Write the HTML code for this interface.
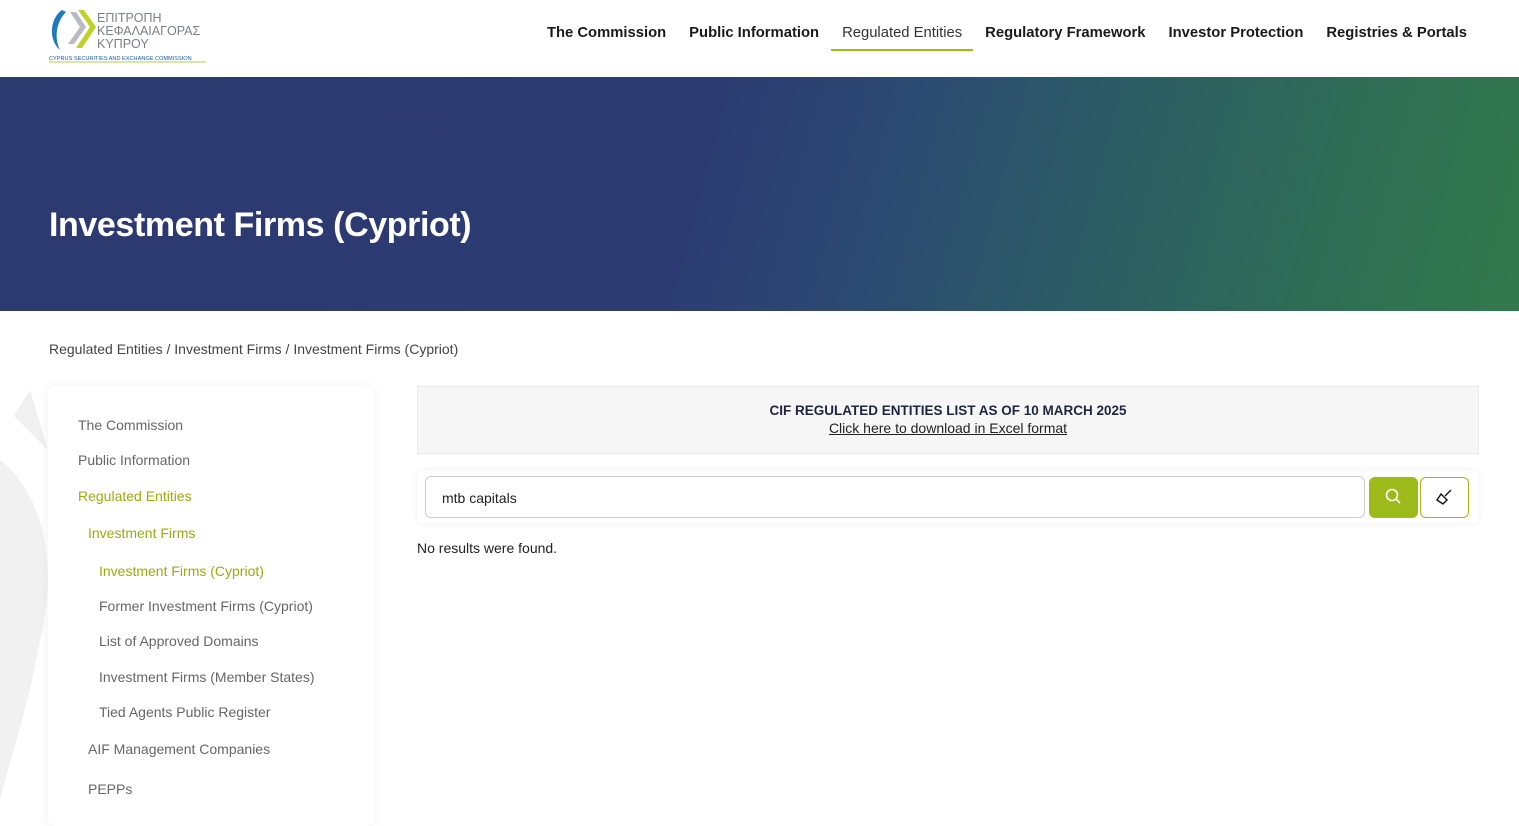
<!DOCTYPE html>
<html><head><meta charset="utf-8"><style>
*{box-sizing:border-box;margin:0;padding:0}
body{width:1519px;height:815px;overflow:hidden;background:#fff;font-family:"Liberation Sans",Roboto,sans-serif;color:#333;position:relative}
.hdr{height:77px;position:relative;background:#fff}
.logo{position:absolute;left:48px;top:6px}
.nav{position:absolute;top:25px;right:52px;display:flex;font-size:14.8px;font-weight:bold;color:#1a1a1a;letter-spacing:0}
.nav span{margin-left:23px;padding-bottom:8px}
.nav .act{font-weight:normal;border-bottom:2px solid #9cbb1a;padding:0 11px 8px;margin-left:12px;margin-right:-11px;color:#333}
.hero{position:absolute;top:77px;left:0;width:1519px;height:234px;background:linear-gradient(105deg,#2c3a70 0%,#2c3b72 45%,#2b4a72 58%,#2c5a66 70%,#2e6a58 84%,#327a4c 100%)}
.hero h1{position:absolute;left:49px;top:129px;color:#fff;font-size:34px;font-weight:bold;letter-spacing:-0.4px}
.bc{position:absolute;top:341px;left:49px;font-size:14px;color:#444}
.deco{position:absolute;left:0;top:380px}
.side{position:absolute;left:48px;top:386px;width:326px;height:440px;background:#fff;border-radius:8px;box-shadow:0 0 12px rgba(0,0,0,.06)}
.side div{position:absolute;font-size:14px;color:#666}
.g{color:#9aab10!important}
.box{position:absolute;left:417px;top:386px;width:1062px;height:68px;background:#f6f6f6;border:1px solid #e8e8e8;text-align:center;font-size:14px;color:#1d2640}
.sr{position:absolute;left:417px;top:471px;width:1062px;height:52px;background:#fff;border-radius:6px;box-shadow:0 0 8px rgba(0,0,0,.07)}
.inp{position:absolute;left:8px;top:5px;width:940px;height:42px;border:1px solid #ccc;border-radius:6px;font-size:14px;padding:13px 16px;color:#222}
.b1{position:absolute;left:952px;top:6px;width:49px;height:41px;background:#9cbb1a;border-radius:6px}
.b2{position:absolute;left:1003px;top:6px;width:49px;height:41px;border:1px solid #9cbb1a;border-radius:6px}
</style></head><body>
<div class="hdr">
<div class="logo">
<svg width="160" height="58">
<path d="M14 4 C2 12 0 34 12 44 C6 32 8 16 18 6Z" fill="#1e7ab8"/>
<path d="M22 6 L32 21 L20 38 L26 38 L38 21 L28 6Z" fill="#b8bcc2"/>
<path d="M30 4 L42 21 L28 42 L34 42 L48 21 L36 4Z" fill="#bed22a"/>
<text x="49" y="16" font-size="12.5" fill="#7a7f88" font-family="Liberation Sans">ΕΠΙΤΡΟΠΗ</text>
<text x="49" y="29" font-size="12.5" fill="#7a7f88" font-family="Liberation Sans">ΚΕΦΑΛΑΙΑΓΟΡΑΣ</text>
<text x="49" y="42" font-size="12.5" fill="#7a7f88" font-family="Liberation Sans">ΚΥΠΡΟΥ</text>
<text x="1" y="54" font-size="5.6" fill="#1e5aa8" font-family="Liberation Sans">CYPRUS SECURITIES AND EXCHANGE COMMISSION</text>
<line x1="1" y1="56" x2="158" y2="56" stroke="#9cbb1a" stroke-width="0.8"/>
</svg></div>
<div class="nav"><span>The Commission</span><span>Public Information</span><span class="act">Regulated Entities</span><span>Regulatory Framework</span><span>Investor Protection</span><span>Registries &amp; Portals</span></div>
</div>
<div class="hero"><h1>Investment Firms (Cypriot)</h1></div>
<div class="bc">Regulated Entities / Investment Firms / Investment Firms (Cypriot)</div>
<svg class="deco" width="60" height="435"><path d="M30 10 L14 36 L48 70Z" fill="#f0f0f0"/><path d="M0 80 C40 110 60 180 40 260 C30 320 10 380 0 420Z" fill="#f1f1f1"/></svg>
<div class="side">
<div style="left:30px;top:31px">The Commission</div>
<div style="left:30px;top:66px">Public Information</div>
<div class="g" style="left:30px;top:102px">Regulated Entities</div>
<div class="g" style="left:40px;top:139px">Investment Firms</div>
<div class="g" style="left:51px;top:177px">Investment Firms (Cypriot)</div>
<div style="left:51px;top:212px">Former Investment Firms (Cypriot)</div>
<div style="left:51px;top:247px">List of Approved Domains</div>
<div style="left:51px;top:283px">Investment Firms (Member States)</div>
<div style="left:51px;top:318px">Tied Agents Public Register</div>
<div style="left:40px;top:355px">AIF Management Companies</div>
<div style="left:40px;top:395px">PEPPs</div>
</div>
<div class="box"><div style="margin-top:16px;font-weight:bold;font-size:13.5px">CIF REGULATED ENTITIES LIST AS OF 10 MARCH 2025</div><div style="text-decoration:underline;margin-top:2px;color:#222">Click here to download in Excel format</div></div>
<div class="sr"><div class="inp">mtb capitals</div>
<div class="b1"><svg width="49" height="41"><circle cx="23" cy="18" r="5.5" fill="none" stroke="#fff" stroke-width="1.6"/><line x1="27" y1="22" x2="31" y2="26" stroke="#fff" stroke-width="1.6"/></svg></div>
<div class="b2"><svg width="47" height="39"><path d="M30 12 L24 18 M20 16 L26 22 L22 26 L16 22Z" fill="none" stroke="#111" stroke-width="1.4"/></svg></div>
</div>
<div style="position:absolute;left:417px;top:540px;font-size:14px;color:#222">No results were found.</div>
</body></html>
